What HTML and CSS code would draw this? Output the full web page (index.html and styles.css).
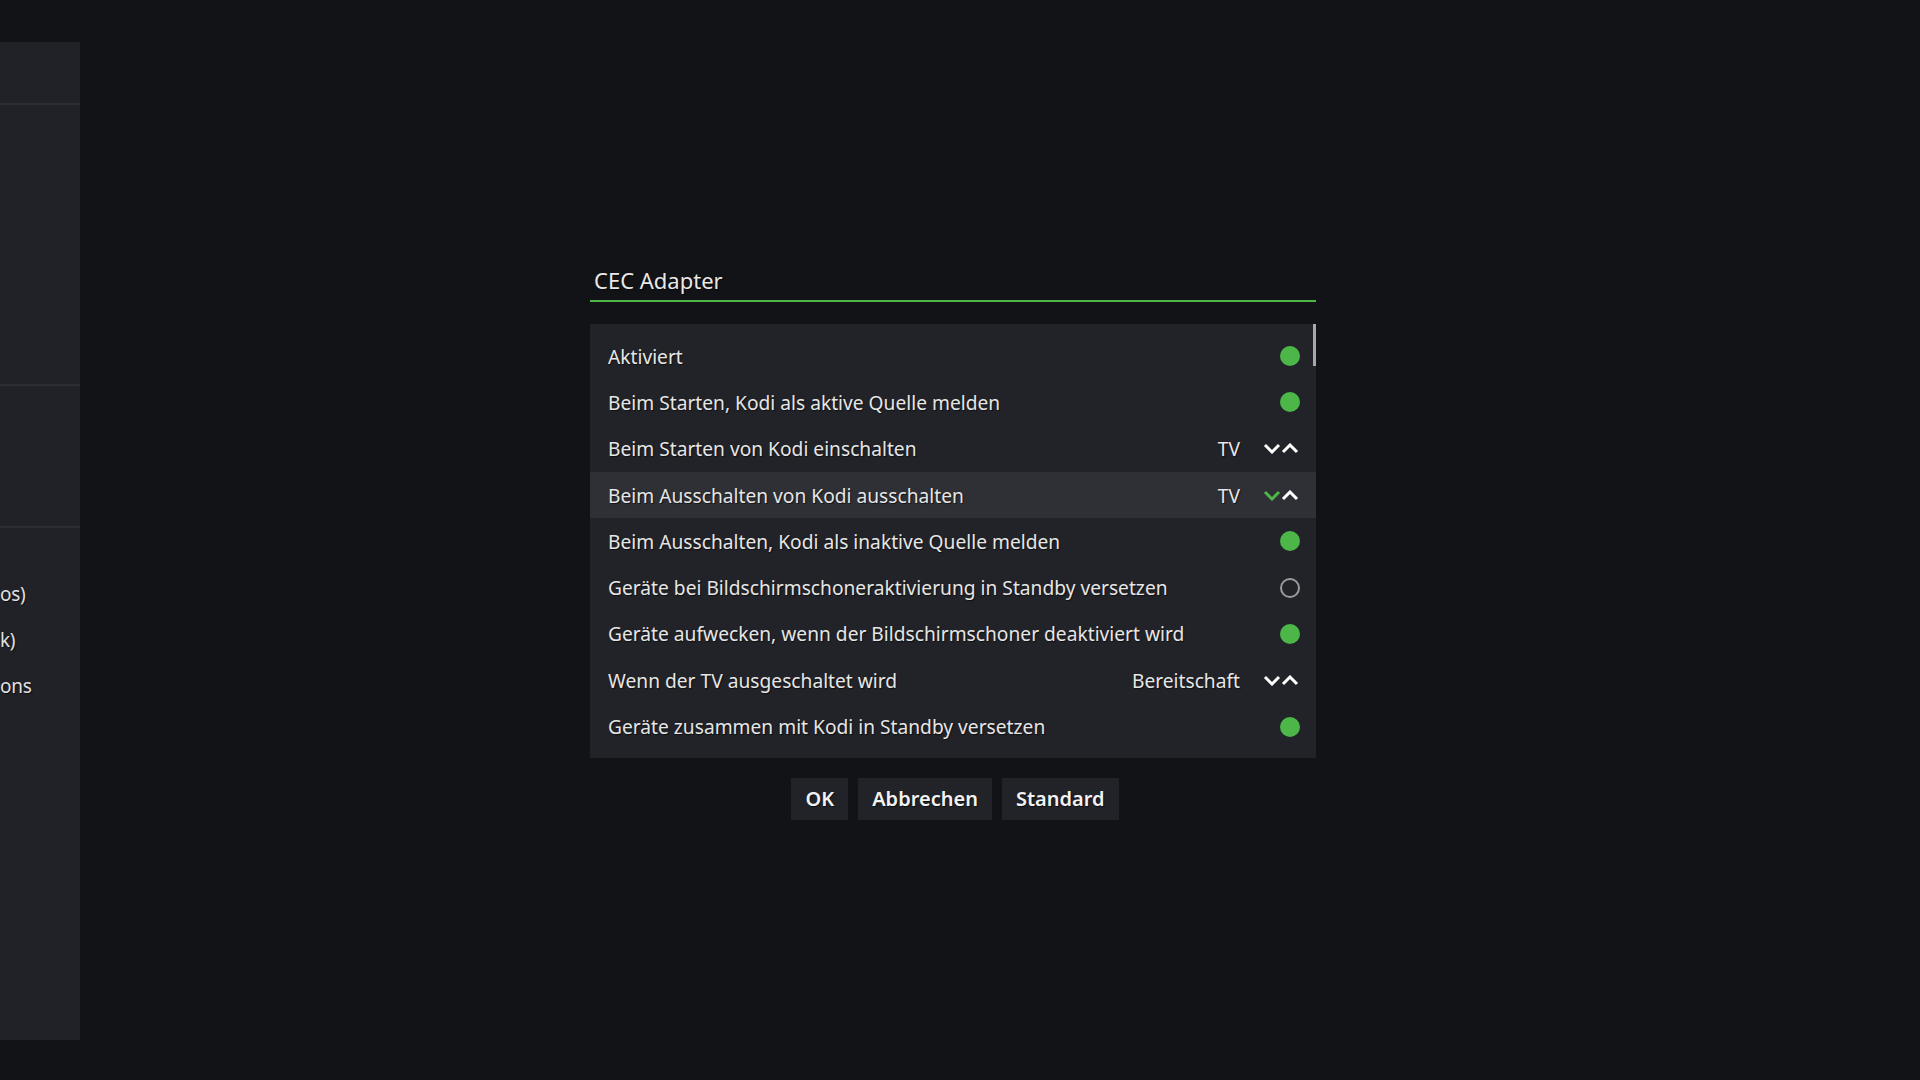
FILE: index.html
```html
<!DOCTYPE html>
<html lang="de">
<head>
<meta charset="utf-8">
<title>CEC Adapter</title>
<link rel="stylesheet" href="styles.css">
</head>
<body>
<div class="screen">
  <aside class="sidebar">
    <div class="side-head"></div>
    <div class="side-block side-block-tall"></div>
    <div class="side-block side-block-mid"></div>
    <div class="side-list">
      <div class="side-item">os)</div>
      <div class="side-item">k)</div>
      <div class="side-item">ons</div>
    </div>
  </aside>

  <main class="dialog">
    <h1 class="dialog-title">CEC Adapter</h1>
    <section class="list">
      <div class="scrollbar"></div>
      <div class="row">
        <span class="label">Aktiviert</span>
        <span class="dot on"></span>
      </div>
      <div class="row">
        <span class="label">Beim Starten, Kodi als aktive Quelle melden</span>
        <span class="dot on"></span>
      </div>
      <div class="row">
        <span class="label">Beim Starten von Kodi einschalten</span>
        <span class="value">TV</span>
        <span class="spin">
          <svg class="chev" viewBox="0 0 18 11" width="18" height="11"><polyline points="2,2 9,9 16,2"/></svg>
          <svg class="chev" viewBox="0 0 18 11" width="18" height="11"><polyline points="2,9 9,2 16,9"/></svg>
        </span>
      </div>
      <div class="row row-focus">
        <span class="label">Beim Ausschalten von Kodi ausschalten</span>
        <span class="value">TV</span>
        <span class="spin">
          <svg class="chev chev-active" viewBox="0 0 18 11" width="18" height="11"><polyline points="2,2 9,9 16,2"/></svg>
          <svg class="chev" viewBox="0 0 18 11" width="18" height="11"><polyline points="2,9 9,2 16,9"/></svg>
        </span>
      </div>
      <div class="row">
        <span class="label">Beim Ausschalten, Kodi als inaktive Quelle melden</span>
        <span class="dot on"></span>
      </div>
      <div class="row">
        <span class="label">Geräte bei Bildschirmschoneraktivierung in Standby versetzen</span>
        <span class="dot off"></span>
      </div>
      <div class="row">
        <span class="label">Geräte aufwecken, wenn der Bildschirmschoner deaktiviert wird</span>
        <span class="dot on"></span>
      </div>
      <div class="row">
        <span class="label">Wenn der TV ausgeschaltet wird</span>
        <span class="value">Bereitschaft</span>
        <span class="spin">
          <svg class="chev" viewBox="0 0 18 11" width="18" height="11"><polyline points="2,2 9,9 16,2"/></svg>
          <svg class="chev" viewBox="0 0 18 11" width="18" height="11"><polyline points="2,9 9,2 16,9"/></svg>
        </span>
      </div>
      <div class="row">
        <span class="label">Geräte zusammen mit Kodi in Standby versetzen</span>
        <span class="dot on"></span>
      </div>
    </section>
    <div class="buttons">
      <button class="btn">OK</button>
      <button class="btn">Abbrechen</button>
      <button class="btn">Standard</button>
    </div>
  </main>
</div>
</body>
</html>
```

FILE: styles.css
```css
* { box-sizing: border-box; }

html, body {
  margin: 0;
  padding: 0;
  width: 1920px;
  height: 1080px;
  background: #121316;
  overflow: hidden;
  font-family: "Noto Sans", "Open Sans", sans-serif;
  color: #e6e6e6;
}

.screen {
  display: flex;
  align-items: flex-start;
  height: 1080px;
}

/* background sidebar */
.sidebar {
  width: 80px;
  height: 998px;
  margin-top: 42px;
  background: #212227;
  display: flex;
  flex-direction: column;
  overflow: hidden;
  flex-shrink: 0;
}
.side-head {
  height: 63px;
  border-bottom: 2px solid #2c2d32;
}
.side-block-tall {
  height: 281px;
  border-bottom: 2px solid #2c2d32;
}
.side-block-mid {
  height: 142px;
  border-bottom: 2px solid #2c2d32;
}
.side-list {
  padding-top: 43px;
  display: flex;
  flex-direction: column;
}
.side-item {
  height: 46px;
  line-height: 46px;
  font-size: 19px;
  letter-spacing: -0.3px;
  white-space: nowrap;
  color: #e0e0e0;
  text-shadow: 1px 1px 1px rgba(0,0,0,0.6);
}

/* dialog */
.dialog {
  margin-left: 510px;
  margin-top: 264px;
  width: 726px;
  display: flex;
  flex-direction: column;
}
.dialog-title {
  margin: 0;
  font-size: 22px;
  font-weight: 400;
  line-height: 32px;
  padding: 0 0 4px 4px;
  border-bottom: 2px solid #4cb648;
  color: #e8e8e8;
  text-shadow: 1px 1px 1px rgba(0,0,0,0.6);
}

.list {
  position: relative;
  margin-top: 22px;
  background: #222328;
  padding: 9px 0 8px 0;
}
.scrollbar {
  position: absolute;
  top: 0;
  right: 0;
  width: 3px;
  height: 42px;
  background: #a8a8a8;
}

.row {
  height: 46.3px;
  display: flex;
  align-items: center;
  padding: 0 16px 0 18px;
  font-size: 19.2px;
  text-shadow: 1px 1px 1px rgba(0,0,0,0.6);
}
.row-focus { background: #2f3035; }
.label { flex: 1; white-space: nowrap; }
.value { margin-right: 23px; }

.dot {
  width: 20px;
  height: 20px;
  border-radius: 50%;
}
.dot.on { background: #4cb648; }
.dot.off { border: 2px solid #9b9b9b; }

.spin {
  display: flex;
  align-items: center;
  margin-right: 1px;
}
.chev {
  display: block;
}
.chev polyline {
  fill: none;
  stroke: #ffffff;
  stroke-width: 3;
  stroke-linejoin: miter;
  stroke-linecap: butt;
}
.chev-active polyline { stroke: #4cb648; }

.buttons {
  display: flex;
  justify-content: center;
  gap: 10px;
  margin-top: 20px;
  padding-left: 4px;
}
.btn {
  height: 42px;
  padding: 0 14px;
  background: #222328;
  border: none;
  font-family: "Noto Sans", "Open Sans", sans-serif;
  font-size: 20px;
  font-weight: 600;
  color: #f2f2f2;
  text-shadow: 1px 1px 1px rgba(0,0,0,0.6);
}
```
